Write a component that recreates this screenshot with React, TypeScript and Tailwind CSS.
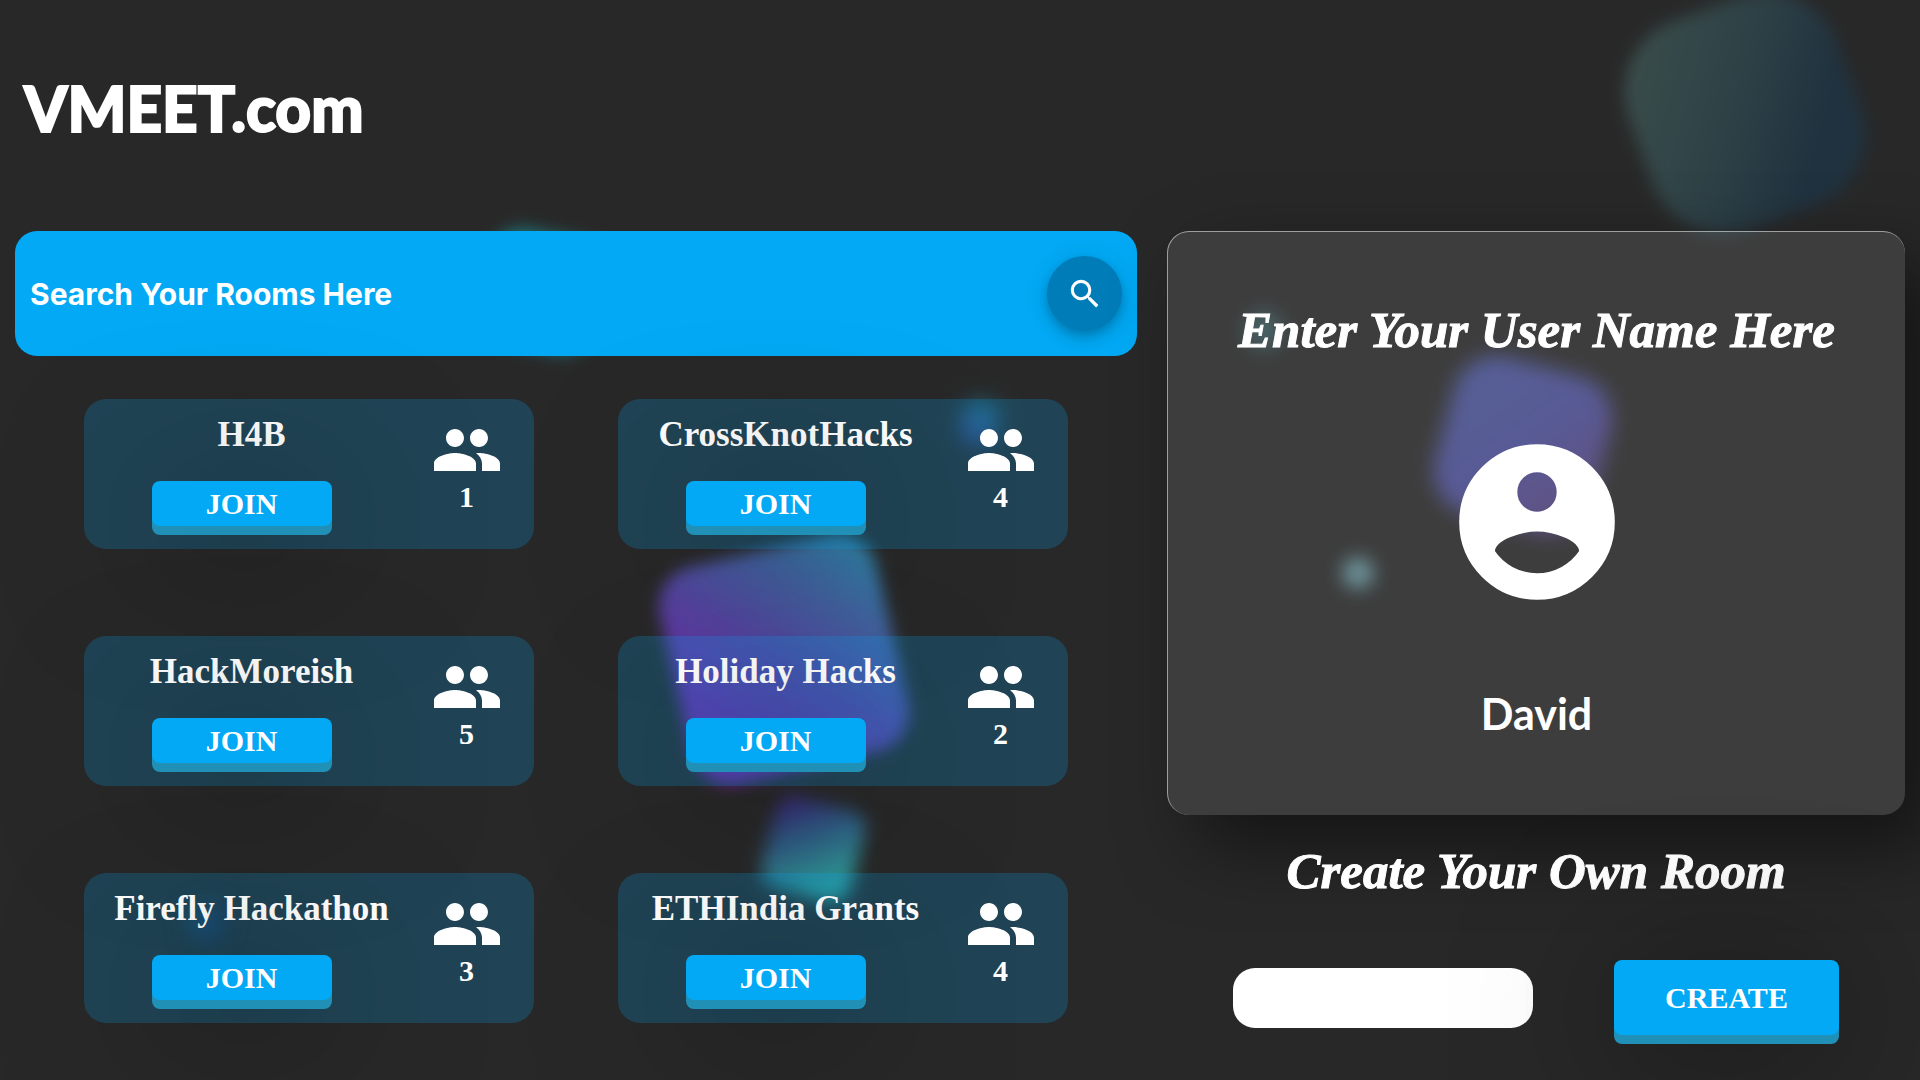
import React from "react";
import { MdPeople, MdSearch } from "react-icons/md";

const rooms = [
  { name: "H4B", members: 1 },
  { name: "CrossKnotHacks", members: 4 },
  { name: "HackMoreish", members: 5 },
  { name: "Holiday Hacks", members: 2 },
  { name: "Firefly Hackathon", members: 3 },
  { name: "ETHIndia Grants", members: 4 },
];

const buttonStyle =
  "rounded-lg bg-[#03a9f4] text-[30px] leading-none font-bold text-white shadow-[0_9px_0_#2190b7,0_15px_150px_rgba(0,0,0,0.5)]";

/* Floating blurred shapes behind the page */
const Shapes = () => (
  <div className="pointer-events-none absolute inset-0" aria-hidden="true">
    <div className="absolute left-[1634px] top-[2px] h-[222px] w-[222px] -rotate-20 rounded-[76px] bg-linear-[125deg,#3d504c,#2c3f45_50%,#20323f_75%,#20323f] blur-[8px]" />
    <div className="absolute left-[673px] top-[548px] h-[222px] w-[222px] -rotate-13 rounded-[40px] bg-linear-[44deg,#7a20a8,#6a2ca8_22%,#54449f_50%,#43609f_72%,#2a88a5] blur-[8px]" />
    <div className="absolute left-[767px] top-[802px] h-[94px] w-[92px] rotate-15 rounded-[18px] bg-linear-[145deg,#3a1c70,#2f5580_35%,#2f9c98_80%] blur-[9px]" />
    <div className="absolute left-[484px] top-[233px] h-[116px] w-[116px] rotate-12 rounded-[32px] bg-[#1f7478] blur-[8px]" />
    <div className="absolute left-[962px] top-[400px] h-[44px] w-[36px] rotate-12 rounded-[16px] bg-linear-[190deg,#1f6a70,#3f3f90] blur-[11px]" />
    <div className="absolute left-[1442px] top-[364px] h-[162px] w-[162px] rotate-15 rounded-[44px] bg-linear-[130deg,#434f8b,#46488a_50%,#523a6c] blur-[10px]" />
    <div className="absolute left-[1342px] top-[557px] h-[32px] w-[32px] rounded-full bg-[#5b848c] blur-[9px]" />
    <div className="absolute left-[1246px] top-[312px] h-[36px] w-[36px] rounded-full bg-[#37565a] blur-[10px]" />
    <div className="absolute left-[188px] top-[904px] h-[36px] w-[36px] rounded-[12px] bg-linear-[120deg,#1d4455,#202850] blur-[11px]" />
  </div>
);

const Avatar = () => (
  <svg
    viewBox="0 0 24 24"
    className="size-[180px] overflow-visible"
    fill="currentColor"
    stroke="currentColor"
    strokeWidth="0.75"
    aria-hidden="true"
  >
    <path d="M12 2C6.48 2 2 6.48 2 12s4.48 10 10 10 10-4.48 10-10S17.52 2 12 2zm0 3c1.66 0 3 1.34 3 3s-1.34 3-3 3-3-1.34-3-3 1.34-3 3-3zm0 14.2c-2.5 0-4.71-1.28-6-3.22.03-1.99 4-3.08 6-3.08 1.99 0 5.97 1.09 6 3.08-1.29 1.94-3.5 3.22-6 3.22z" />
  </svg>
);

const RoomCard = ({ name, members }: { name: string; members: number }) => {
  return (
    <li className="flex h-[150px] rounded-[22px] bg-[#03a9f4]/22">
      <div className="flex w-[70%] flex-col items-center">
        <h2 className="mt-3 pl-5 text-[35px] leading-[48px] font-bold whitespace-nowrap">
          {name}
        </h2>
        <button type="button" className={`mt-[22px] h-[45px] w-[180px] ${buttonStyle}`}>
          JOIN
        </button>
      </div>
      <div className="relative flex w-[30%] flex-col items-center pt-[15px]">
        <MdPeople size={72} />
        <span className="text-[30px] leading-[22px] font-bold">{members}</span>
      </div>
    </li>
  );
};

const App = () => {
  return (
    <div className="relative min-h-screen overflow-hidden bg-[#282828] font-['Liberation_Serif',serif] text-white">
      <Shapes />

      {/* HEADER */}
      <header className="relative flex h-[216px] items-center px-6">
        <h1 className="font-['Lato',sans-serif] text-[62px] leading-none font-black [-webkit-text-stroke:2px_white]">
          VMEET.com
        </h1>
      </header>

      <main className="relative flex">
        {/* LEFT SECTION */}
        <section className="w-[60%]">
          <form className="m-[15px] flex h-[125px] items-center rounded-[22px] bg-[#03a9f4] px-[15px]">
            <input
              type="search"
              aria-label="Search Your Rooms Here"
              placeholder="Search Your Rooms Here"
              className="h-[60px] min-w-0 flex-1 bg-transparent font-['Inter',sans-serif] text-[30px] font-bold text-white outline-none placeholder:text-white"
            />
            <button
              type="button"
              aria-label="Search"
              className="flex size-[75px] items-center justify-center rounded-full bg-[#007cb8] shadow-[0_4px_8px_rgba(0,0,0,0.15),0_9px_15px_rgba(0,0,0,0.1),0_2px_27px_rgba(0,0,0,0.08)]"
            >
              <MdSearch size={38} />
            </button>
          </form>

          <ul className="mt-[43px] grid grid-cols-2 gap-x-[84px] gap-y-[87px] px-[84px]">
            {rooms.map((room) => (
              <RoomCard key={room.name} name={room.name} members={room.members} />
            ))}
          </ul>
        </section>

        {/* RIGHT SECTION */}
        <section className="w-[40%]">
          <div className="m-[15px] flex flex-col items-center gap-[72px] rounded-[22px] border-t border-l border-white/50 bg-white/10 pt-[68px] pb-[71px] shadow-[30px_30px_75px_rgba(0,0,0,0.5)]">
            <label
              htmlFor="username"
              className="text-[51px] leading-[60px] font-bold whitespace-nowrap italic [-webkit-text-stroke:1px_white]"
            >
              Enter Your User Name Here
            </label>
            <Avatar />
            <input
              id="username"
              type="text"
              defaultValue="David"
              className="h-[60px] w-[60%] bg-transparent text-center font-['Lato',sans-serif] text-[43px] font-bold outline-none"
            />
          </div>

          <form>
            <label
              htmlFor="room"
              className="mt-[26px] block text-center text-[51px] leading-[60px] font-bold italic [-webkit-text-stroke:1px_white]"
            >
              Create Your Own Room
            </label>
            <div className="mt-[59px] flex items-center justify-evenly">
              <input
                id="room"
                type="text"
                className="h-[60px] w-[300px] rounded-[22px] bg-white px-4 text-[30px] text-black outline-none"
              />
              <button type="button" className={`h-[75px] w-[225px] ${buttonStyle}`}>
                CREATE
              </button>
            </div>
          </form>
        </section>
      </main>
    </div>
  );
};

export default App;
